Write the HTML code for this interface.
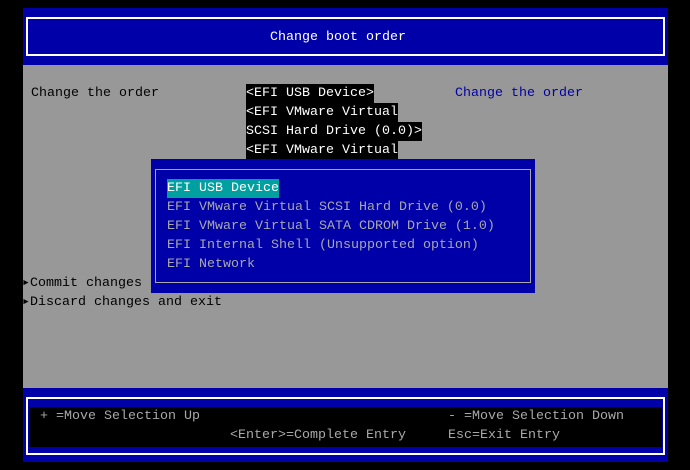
<!DOCTYPE html>
<html><head><meta charset="utf-8"><style>
body{margin:0;width:690px;height:470px;background:#000;overflow:hidden;position:relative;font-family:"Liberation Mono","DejaVu Sans Mono",monospace;font-size:13.33px;}
div{position:absolute;box-sizing:border-box;}
.t{white-space:pre;line-height:19px;height:19px;}
.k{color:#000}
.g{color:#a8a8a8}
</style></head><body>
<div style="left:23px;top:8px;width:645px;height:57px;background:#0000a8"></div>
<div style="left:26px;top:17px;width:639px;height:39px;border:2px solid #fff"></div>
<div class="t" style="left:0;width:676px;top:28px;text-align:center;color:#fff">Change boot order</div>
<div style="left:23px;top:65px;width:645px;height:323px;background:#989898"></div>
<div class="t k" style="left:31px;top:84px">Change the order</div>
<div class="t" style="left:455px;top:84px;color:#0000a8">Change the order</div>
<div class="t" style="left:246px;top:84px;background:#000;color:#fff">&lt;EFI USB Device&gt;</div>
<div class="t" style="left:246px;top:103px;background:#000;color:#fff">&lt;EFI VMware Virtual</div>
<div class="t" style="left:246px;top:122px;background:#000;color:#fff">SCSI Hard Drive (0.0)&gt;</div>
<div class="t" style="left:246px;top:141px;background:#000;color:#fff">&lt;EFI VMware Virtual</div>
<div class="t k" style="left:22px;top:274px">▸Commit changes</div>
<div class="t k" style="left:22px;top:293px">▸Discard changes and exit</div>
<div style="left:151px;top:159px;width:384px;height:134px;background:#0000a8"></div>
<div style="left:155px;top:169px;width:376px;height:114px;border:1px solid #a8a8a8"></div>
<div class="t" style="left:167px;top:179px;background:#00a0a0;color:#fff">EFI USB Device</div>
<div class="t g" style="left:167px;top:198px">EFI VMware Virtual SCSI Hard Drive (0.0)</div>
<div class="t g" style="left:167px;top:217px">EFI VMware Virtual SATA CDROM Drive (1.0)</div>
<div class="t g" style="left:167px;top:236px">EFI Internal Shell (Unsupported option)</div>
<div class="t g" style="left:167px;top:255px">EFI Network</div>
<div style="left:23px;top:388px;width:645px;height:74px;background:#0000a8"></div>
<div style="left:26px;top:397px;width:639px;height:58px;border:2px solid #fff"></div>
<div style="left:29px;top:407px;width:633px;height:40px;background:#000"></div>
<div class="t g" style="left:40px;top:407px">+ =Move Selection Up</div>
<div class="t g" style="left:448px;top:407px">- =Move Selection Down</div>
<div class="t g" style="left:230px;top:426px">&lt;Enter&gt;=Complete Entry</div>
<div class="t g" style="left:448px;top:426px">Esc=Exit Entry</div>
</body></html>
